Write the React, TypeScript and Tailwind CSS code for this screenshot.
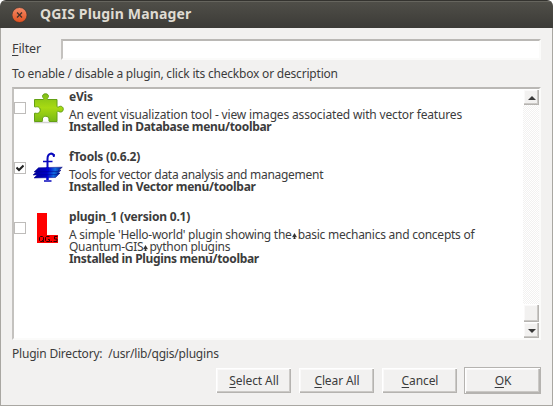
import type { ReactNode } from "react";

const raised =
  "border-t border-l border-white shadow-[inset_-1px_-1px_0_#b5b3b0,inset_-2px_-2px_0_#cbc9c6,inset_1px_1px_0_#faf9f9]";
const sunken = "border-2 border-t-[#bab8b5] border-l-[#c4c2bf] border-r-[#fbfbfa] border-b-[#fbfbfa]";

function PuzzleIcon() {
  return (
    <svg width="32" height="33" viewBox="0 0 32 33">
      <defs>
        <linearGradient id="leaf" x1="0" y1="0" x2="0" y2="1">
          <stop offset="0" stopColor="#80be18" />
          <stop offset="0.5" stopColor="#a8da12" />
          <stop offset="1" stopColor="#78b816" />
        </linearGradient>
      </defs>
      <path d="M1 31.500H25" stroke="#d2d2d2" strokeWidth="1.500" />
      <path
        d="M1.500 8.500H10C11 8.500 11 7.500 10.200 6.800C8.500 5 10 2.800 12.500 2.800S16.500 5 14.800 6.800C14 7.500 14 8.500 15 8.500H24V15C24 16.500 25 16.300 26 15.700C28 14.500 30.300 15.800 30.300 18.200S28 21.700 26 20.700C25 20 24 20 24 21.500V30.500H16.500C15.500 30.300 16 29.600 16 28C16 26.300 14.500 25.300 12.700 25.300S9.400 26.300 9.400 28C9.400 29.600 10 30.300 9 30.500H1.500V22.300C2 21.800 3 22.500 4.500 22.300C8.200 21.800 8.200 16.300 4.500 15.800C3 15.600 2 16.300 1.500 15.800Z"
        fill="url(#leaf)"
        stroke="#63a014"
      />
    </svg>
  );
}

function FToolsIcon() {
  return (
    <svg width="32" height="33" viewBox="0 0 32 33">
      <defs>
        <linearGradient id="sheet" x1="0" y1="0" x2="1" y2="0">
          <stop offset="0" stopColor="#00009c" />
          <stop offset="0.5" stopColor="#0000c8" />
          <stop offset="0.75" stopColor="#126ee0" />
          <stop offset="1" stopColor="#001080" />
        </linearGradient>
      </defs>
      <path d="M21 5C20.500 1.800 14.500 1 14.500 8V29" stroke="#0909bd" strokeWidth="2" fill="none" />
      <path d="M10 10.500H19.500M11 30H18.500" stroke="#0909bd" strokeWidth="1.500" fill="none" />
      <path d="M19.500 3H21.700V6H20Z" fill="#0909bd" />
      <path d="M1 27L5.500 22.500L27 22L22.500 26.500Z" fill="url(#sheet)" stroke="#000087" strokeWidth=".5" />
      <path d="M0 24L4.500 19.700L28 19.200L23.500 23.500Z" fill="url(#sheet)" stroke="#000087" strokeWidth=".5" />
      <path d="M1 21L5.500 16.700L29.300 16.200L24.500 20.500Z" fill="url(#sheet)" stroke="#000087" strokeWidth=".5" />
      <path d="M14.500 16V20M14.500 26V29" stroke="#0000d8" strokeWidth="2" fill="none" />
    </svg>
  );
}

function RedIcon() {
  return (
    <svg width="32" height="33" viewBox="0 0 32 33">
      <path d="M4 2H14V24H25V32H4Z" fill="#ff0000" />
      <path
        d="M9.500 25.500H7.500L6.500 26.500V29.500L7.500 30.500H9.500L10.500 29.500V26.500ZM9 29L11 31M16.500 25.500H13.500L12.500 26.500V29.500L13.500 30.500H16.500V28.500H15M24.500 25.500H21.500V28H24V30.500H20.500"
        fill="none"
        stroke="#300000"
        strokeWidth="1"
      />
      <path d="M17.500 30.500H19" stroke="#300000" />
    </svg>
  );
}

function Spade() {
  return (
    <svg className="mr-px inline-block align-baseline" width="5" height="6" viewBox="0 0 5 7">
      <path d="M2.500 0L4 2.500L5 4V5H3L4 7H1L2 5H0V4L1 2.500Z" fill="#333" />
    </svg>
  );
}

function Row({ icon, name, checked, children }: { icon: ReactNode; name: ReactNode; checked?: boolean; children: ReactNode }) {
  return (
    <div className="flex h-[60px] shrink-0">
      <div className="mt-[12px] flex size-[10px] shrink-0 items-center justify-center bg-white outline outline-[#bebcba]">
        {checked && (
          <svg width="8" height="8" viewBox="0 0 8 8">
            <path d="M.5 3.500L3 6L7.500 1.500" fill="none" stroke="#222" strokeWidth="2" />
          </svg>
        )}
      </div>
      <div className="ml-2 w-9 shrink-0">{icon}</div>
      <div className="whitespace-nowrap leading-[12px]">
        <div className="mb-[6px] font-bold tracking-[-0.2px]">{name}</div>
        {children}
      </div>
    </div>
  );
}

function Arrow({ down }: { down?: boolean }) {
  return (
    <div className={`flex h-4 shrink-0 items-center justify-center bg-[#f2f1f0] ${raised}`}>
      <svg width="8" height="4" viewBox="0 0 8 4">
        <path d={down ? "M0 0H8L4 4Z" : "M0 4H8L4 0Z"} fill="#383838" />
      </svg>
    </div>
  );
}

function Button({ mark, rest }: { mark: string; rest: string }) {
  return (
    <button className={`flex h-[25px] w-[75px] items-center justify-center pb-px ${raised}`}>
      <Label mark={mark} rest={rest} />
    </button>
  );
}

function Label({ mark, rest }: { mark: string; rest: string }) {
  return (
    <span className="tracking-[-0.1px]">
      <span className="underline underline-offset-2">{mark}</span>
      {rest}
    </span>
  );
}

export default function App() {
  return (
    <div className="h-[406px] w-[553px] overflow-hidden bg-white font-['Noto_Sans','Open_Sans',sans-serif] text-[12px] text-[#3c3c3c]">
      <div className="flex h-full flex-col overflow-hidden rounded-t-[6px] bg-[#f2f1f0]">
        <header className="flex h-7 shrink-0 items-center border-t border-[#34332f] bg-linear-to-b from-[#504f49] to-[#3c3b37] pl-3 shadow-[inset_0_1px_0_#66655e]">
          <svg width="16" height="16" viewBox="0 0 16 16">
            <defs>
              <linearGradient id="close" x1="0" y1="0" x2="0" y2="1">
                <stop stopColor="#f58b68" />
                <stop offset="1" stopColor="#e1501f" />
              </linearGradient>
            </defs>
            <circle cx="7.500" cy="8" r="7.500" fill="url(#close)" stroke="#34302c" strokeWidth=".6" />
            <path d="M5 5.500L10 10.500M10 5.500L5 10.500" stroke="#433129" strokeWidth="1.300" />
          </svg>
          <h1 className="ml-3 pb-[2px] whitespace-nowrap text-[14px] leading-none font-bold tracking-[0.17px] text-[#dfdbd2]">QGIS Plugin Manager</h1>
        </header>
        <main className="flex min-h-0 flex-1 flex-col border-x border-b border-[#a9a7a2] px-[11px]">
          <div className="mt-[11px] flex h-[21px] shrink-0 items-center">
            <label className="w-[49px] text-[12.500px]">
              <Label mark="F" rest="ilter" />
            </label>
            <div className={`h-full flex-1 bg-white ${sunken}`} />
          </div>
          <div className="mt-[5px] h-[22px] shrink-0 whitespace-nowrap leading-[18px] tracking-[-0.2px]">
            To enable / disable a plugin, click its checkbox or description
          </div>
          <div className={`flex h-[253px] shrink-0 bg-white ${sunken}`}>
            <div className="flex min-w-0 flex-1 flex-col pt-[2px] pl-px">
              <Row icon={<PuzzleIcon />} name="eVis">
                <div className="tracking-[-0.16px]">An event visualization tool - view images associated with vector features</div>
                <div className="font-bold tracking-[-0.32px]">Installed in Database menu/toolbar</div>
              </Row>
              <Row icon={<FToolsIcon />} name="fTools (0.6.2)" checked>
                <div className="tracking-[-0.28px]">Tools for vector data analysis and management</div>
                <div className="font-bold tracking-[-0.29px]">Installed in Vector menu/toolbar</div>
              </Row>
              <Row icon={<RedIcon />} name="plugin_1 (version 0.1)">
                <div className="tracking-[-0.250px]">
                  A simple 'Hello-world' plugin showing the
                  <Spade />
                  basic mechanics and concepts of
                </div>
                <div className="tracking-[-0.250px]">
                  Quantum-GIS
                  <Spade />
                  python plugins
                </div>
                <div className="font-bold tracking-[-0.33px]">Installed in Plugins menu/toolbar</div>
              </Row>
            </div>
            <div className="flex w-4 flex-col bg-[repeating-conic-gradient(#f2f1f0_0_25%,#fff_0_50%)] bg-size-[2px_2px]">
              <Arrow />
              <div className="flex-1" />
              <div className={`h-[18px] bg-[#f2f1f0] ${raised}`} />
              <Arrow down />
            </div>
          </div>
          <div className="mt-[4px] h-[18px] shrink-0 whitespace-pre leading-[20px] tracking-[-0.2px]">Plugin Directory:  /usr/lib/qgis/plugins</div>
          <div className="mt-[5px] flex shrink-0 items-center justify-end gap-2">
            <Button mark="S" rest="elect All" />
            <Button mark="C" rest="lear All" />
            <Button mark="C" rest="ancel" />
            <div className="-ml-px border border-[#b5b3b0]">
              <Button mark="O" rest="K" />
            </div>
          </div>
        </main>
      </div>
    </div>
  );
}
